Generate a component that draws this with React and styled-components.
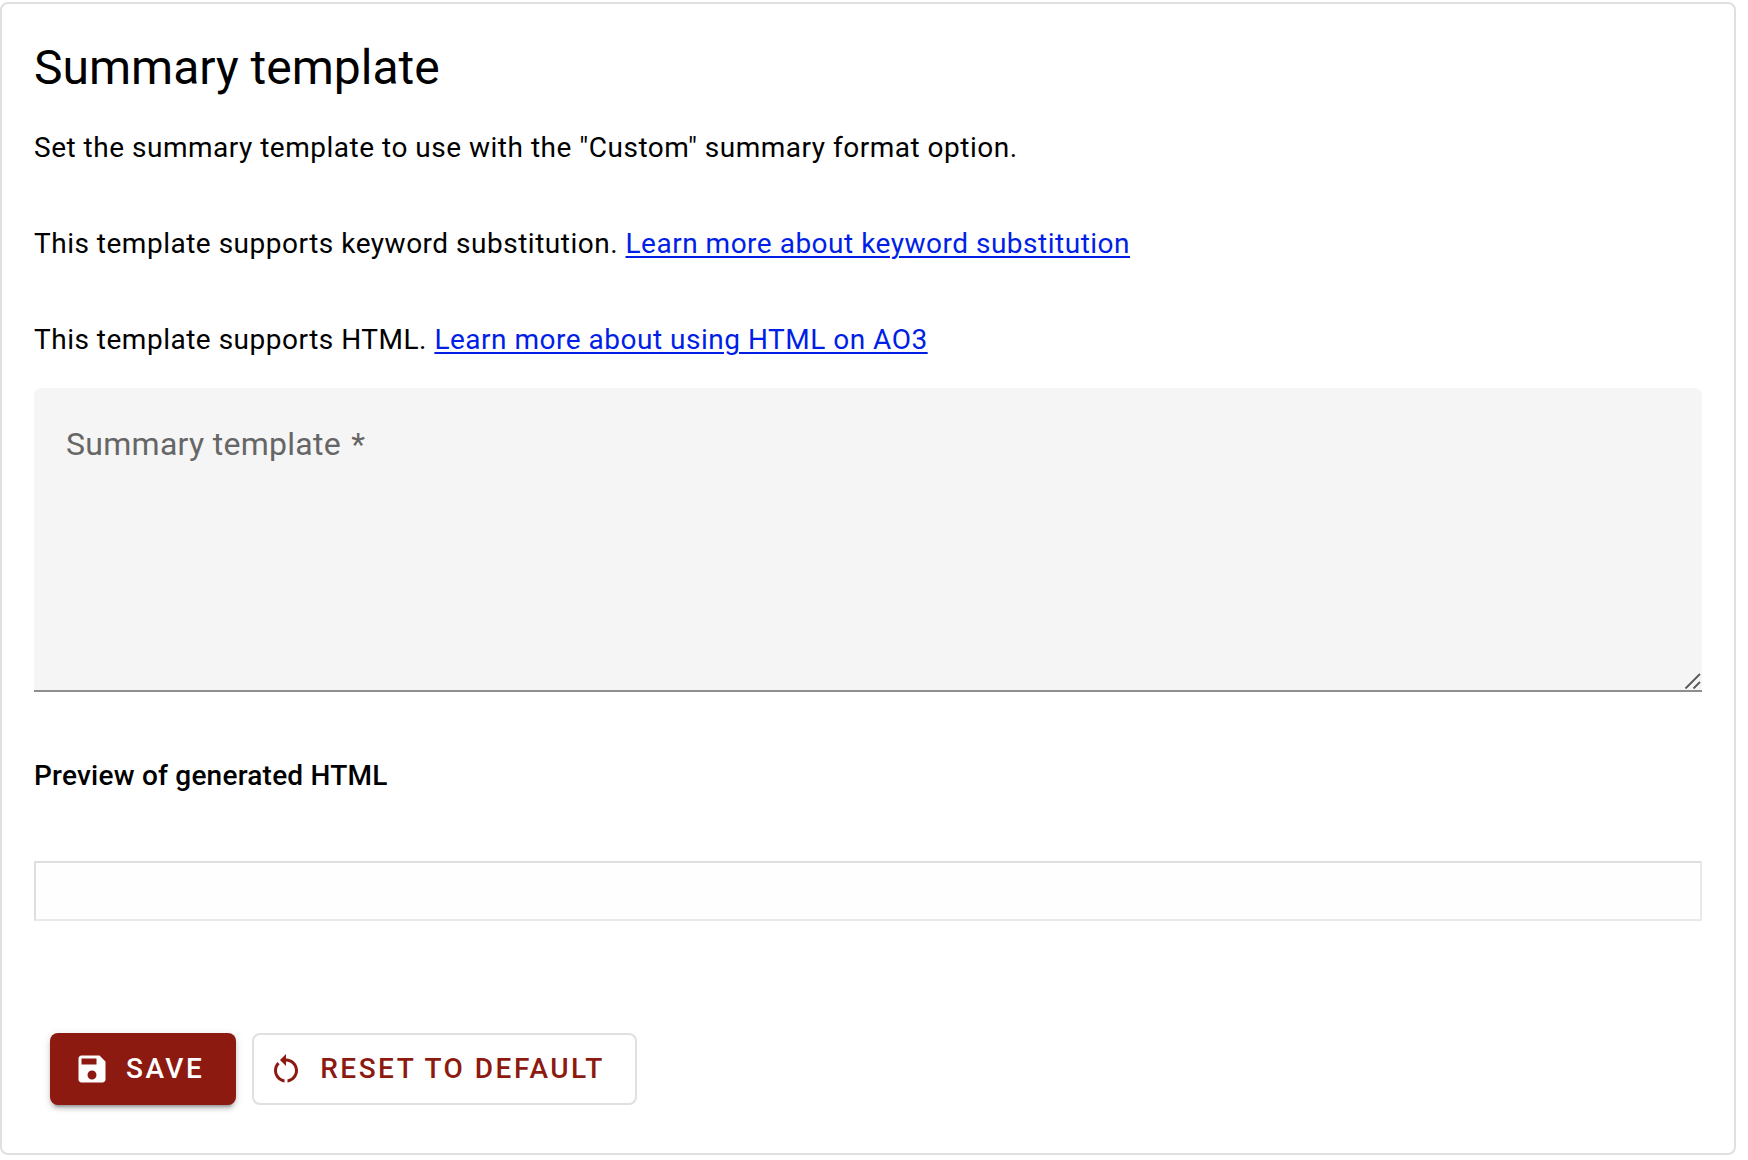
import React, { useState } from "react";
import styled, { createGlobalStyle } from "styled-components";

const GlobalStyle = createGlobalStyle`
  *, *::before, *::after { box-sizing: border-box; }
  body {
    margin: 0;
    padding: 2px 12px 5px 0;
    background: #fff;
    color: #000;
    font-family: Roboto, "Liberation Sans", sans-serif;
    -webkit-font-smoothing: antialiased;
  }
`;

const Card = styled.section`
  display: flex;
  flex-direction: column;
  padding: 32px 32px 48px;
  border: 2px solid #e0e0e0;
  border-radius: 8px;
  background: #fff;
`;

const Title = styled.h2`
  margin: 0;
  font-size: 48px;
  font-weight: 400;
  line-height: 64px;
`;

const Paragraph = styled.p`
  margin: 28px 0;
  font-size: 28px;
  line-height: 40px;
  letter-spacing: 0.018em;
`;

const Link = styled.a`
  color: #001ee6;
  text-decoration: underline;
  text-decoration-thickness: 2px;
  text-underline-offset: 3px;
`;

const Field = styled.div`
  position: relative;
  display: flex;
  height: 304px;
  border-bottom: 2px solid #8e8e8e;
  border-radius: 8px 8px 0 0;
  background: #f5f5f5;
  overflow: hidden;
`;

const FieldLabel = styled.label`
  position: absolute;
  top: 36px;
  left: 32px;
  color: #666;
  font-size: 32px;
  line-height: 40px;
  letter-spacing: 0.009em;
  pointer-events: none;
`;

const RequiredMark = styled.span`
  margin-left: 2px;
`;

const TextArea = styled.textarea`
  flex: 1;
  min-width: 0;
  padding: 36px 32px;
  border: 0;
  outline: 0;
  background: transparent;
  color: #222;
  font: 400 32px/40px Roboto, "Liberation Sans", sans-serif;
  resize: none;
`;

const Grip = styled.svg`
  position: absolute;
  right: 0;
  bottom: 0;
  width: 18px;
  height: 18px;
  pointer-events: none;
`;

const PreviewTitle = styled.h3`
  margin: 62px 0 63px;
  font-size: 28px;
  font-weight: 500;
  line-height: 44px;
  letter-spacing: 0.008em;
`;

const Preview = styled.div`
  min-height: 60px;
  padding: 16px;
  border: 2px solid;
  border-color: #dedede #e9e9e9 #e9e9e9 #dedede;
  background: #fefefe;
`;

const Actions = styled.div`
  display: flex;
  flex-wrap: wrap;
  gap: 16px;
  margin-top: 112px;
  padding: 0 16px;
`;

const Button = styled.button`
  display: inline-flex;
  align-items: center;
  gap: 16px;
  height: 72px;
  padding: ${(p) => (p.$raised ? "0 32px 0 24px" : "0 30px 0 14px")};
  border: ${(p) => (p.$raised ? "0" : "2px solid #e0e0e0")};
  border-radius: 8px;
  background: ${(p) => (p.$raised ? "#8c1a11" : "#fff")};
  color: ${(p) => (p.$raised ? "#fff" : "#8c1a11")};
  box-shadow: ${(p) =>
    p.$raised
      ? "0 6px 2px -4px rgba(0,0,0,.2), 0 4px 4px 0 rgba(0,0,0,.14), 0 2px 10px 0 rgba(0,0,0,.12)"
      : "none"};
  font: 500 28px/36px Roboto, "Liberation Sans", sans-serif;
  letter-spacing: 0.089em;
  text-transform: uppercase;
  cursor: pointer;
`;

const ButtonIcon = styled.svg`
  flex: none;
  width: 36px;
  height: 36px;
  fill: currentColor;
`;

export default function App() {
  const [value, setValue] = useState("");
  return (
    <>
      <GlobalStyle />
      <Card>
        <Title>Summary template</Title>
        <Paragraph>
          Set the summary template to use with the "Custom" summary format option.
        </Paragraph>
        <Paragraph>
          This template supports keyword substitution.{" "}
          <Link href="#keywords">Learn more about keyword substitution</Link>
        </Paragraph>
        <Paragraph>
          This template supports HTML.{" "}
          <Link href="#html">Learn more about using HTML on AO3</Link>
        </Paragraph>
        <Field>
          <TextArea
            id="summary-template"
            aria-label="Summary template"
            required
            value={value}
            onChange={(e) => setValue(e.target.value)}
          />
          {!value && (
            <FieldLabel htmlFor="summary-template">
              Summary template <RequiredMark>*</RequiredMark>
            </FieldLabel>
          )}
          <Grip viewBox="0 0 18 18" fill="none" strokeWidth="2" aria-hidden="true">
            <path d="M2 17.5L16.5 3M10 17.5L16.5 11" stroke="#fff" />
            <path d="M1.5 16.5L16 2M9.5 16.5L16 10" stroke="#5c5c5f" />
          </Grip>
        </Field>
        <PreviewTitle>Preview of generated HTML</PreviewTitle>
        <Preview>{value}</Preview>
        <Actions>
          <Button type="button" $raised>
            <ButtonIcon viewBox="0 0 24 24" aria-hidden="true">
              <path d="M17 3H5c-1.11 0-2 .9-2 2v14c0 1.1.89 2 2 2h14c1.1 0 2-.9 2-2V7l-4-4zm-5 16c-1.66 0-3-1.34-3-3s1.34-3 3-3 3 1.34 3 3-1.34 3-3 3zm3-10H5V5h10v4z" />
            </ButtonIcon>
            Save
          </Button>
          <Button type="button" onClick={() => setValue("")}>
            <ButtonIcon viewBox="0 0 24 24" aria-hidden="true">
              <path d="M12 5V2L8 6l4 4V7c3.31 0 6 2.69 6 6 0 2.97-2.17 5.43-5 5.91v2.02c3.95-.49 7-3.85 7-7.93 0-4.42-3.58-8-8-8zm-6 8c0-1.65.67-3.15 1.76-4.24L6.34 7.34C4.9 8.79 4 10.79 4 13c0 4.08 3.05 7.44 7 7.93v-2.02c-2.83-.48-5-2.94-5-5.91z" />
            </ButtonIcon>
            Reset to default
          </Button>
        </Actions>
      </Card>
    </>
  );
}
